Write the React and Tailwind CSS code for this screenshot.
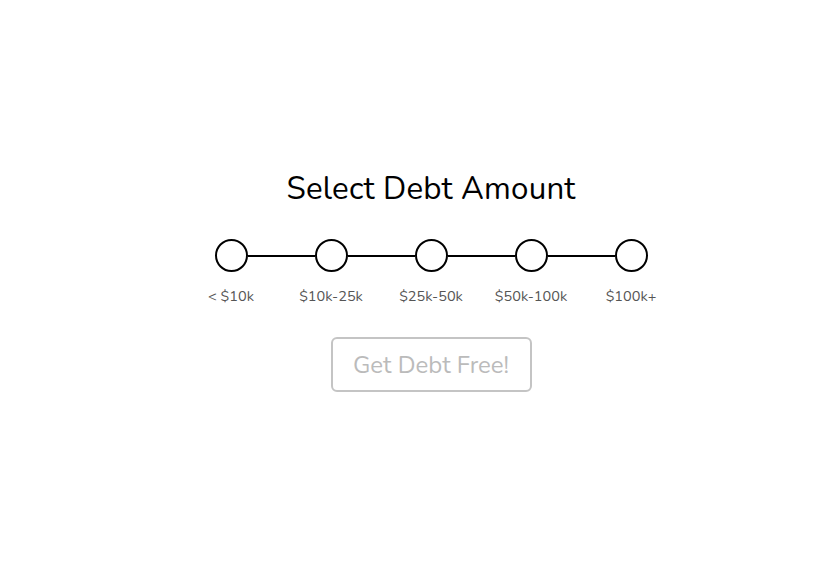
const steps = ['< $10k', '$10k-25k', '$25k-50k', '$50k-100k', '$100k+']

export default function App() {
  return (
    <div className="w-full h-[564px] bg-white flex flex-col items-center pt-[169px] pl-[29px]" style={{ fontFamily: 'Nunito, Lato, "Noto Sans", sans-serif' }}>
      <h1 className="text-[31.3px] leading-[40px] text-black tracking-[0.2px]">Select Debt Amount</h1>

      <div className="mt-[30px] flex items-center">
        {steps.map((s, i) => (
          <div key={s} className="flex items-center">
            {i > 0 && <div className="w-[67px] h-[2px] bg-black" />}
            <button className="w-[33px] h-[33px] rounded-full border-2 border-black bg-white" />
          </div>
        ))}
      </div>

      <div className="mt-[14px] flex">
        {steps.map((s) => (
          <div key={s} className="w-[100px] text-center text-[14.5px] leading-[20px] text-[#555]">
            {s}
          </div>
        ))}
      </div>

      <button className="mt-[31px] w-[201px] h-[55px] rounded-[6px] border-2 border-[#c4c4c4] text-[24px] text-[#bbb] bg-white">
        Get Debt Free!
      </button>
    </div>
  )
}
